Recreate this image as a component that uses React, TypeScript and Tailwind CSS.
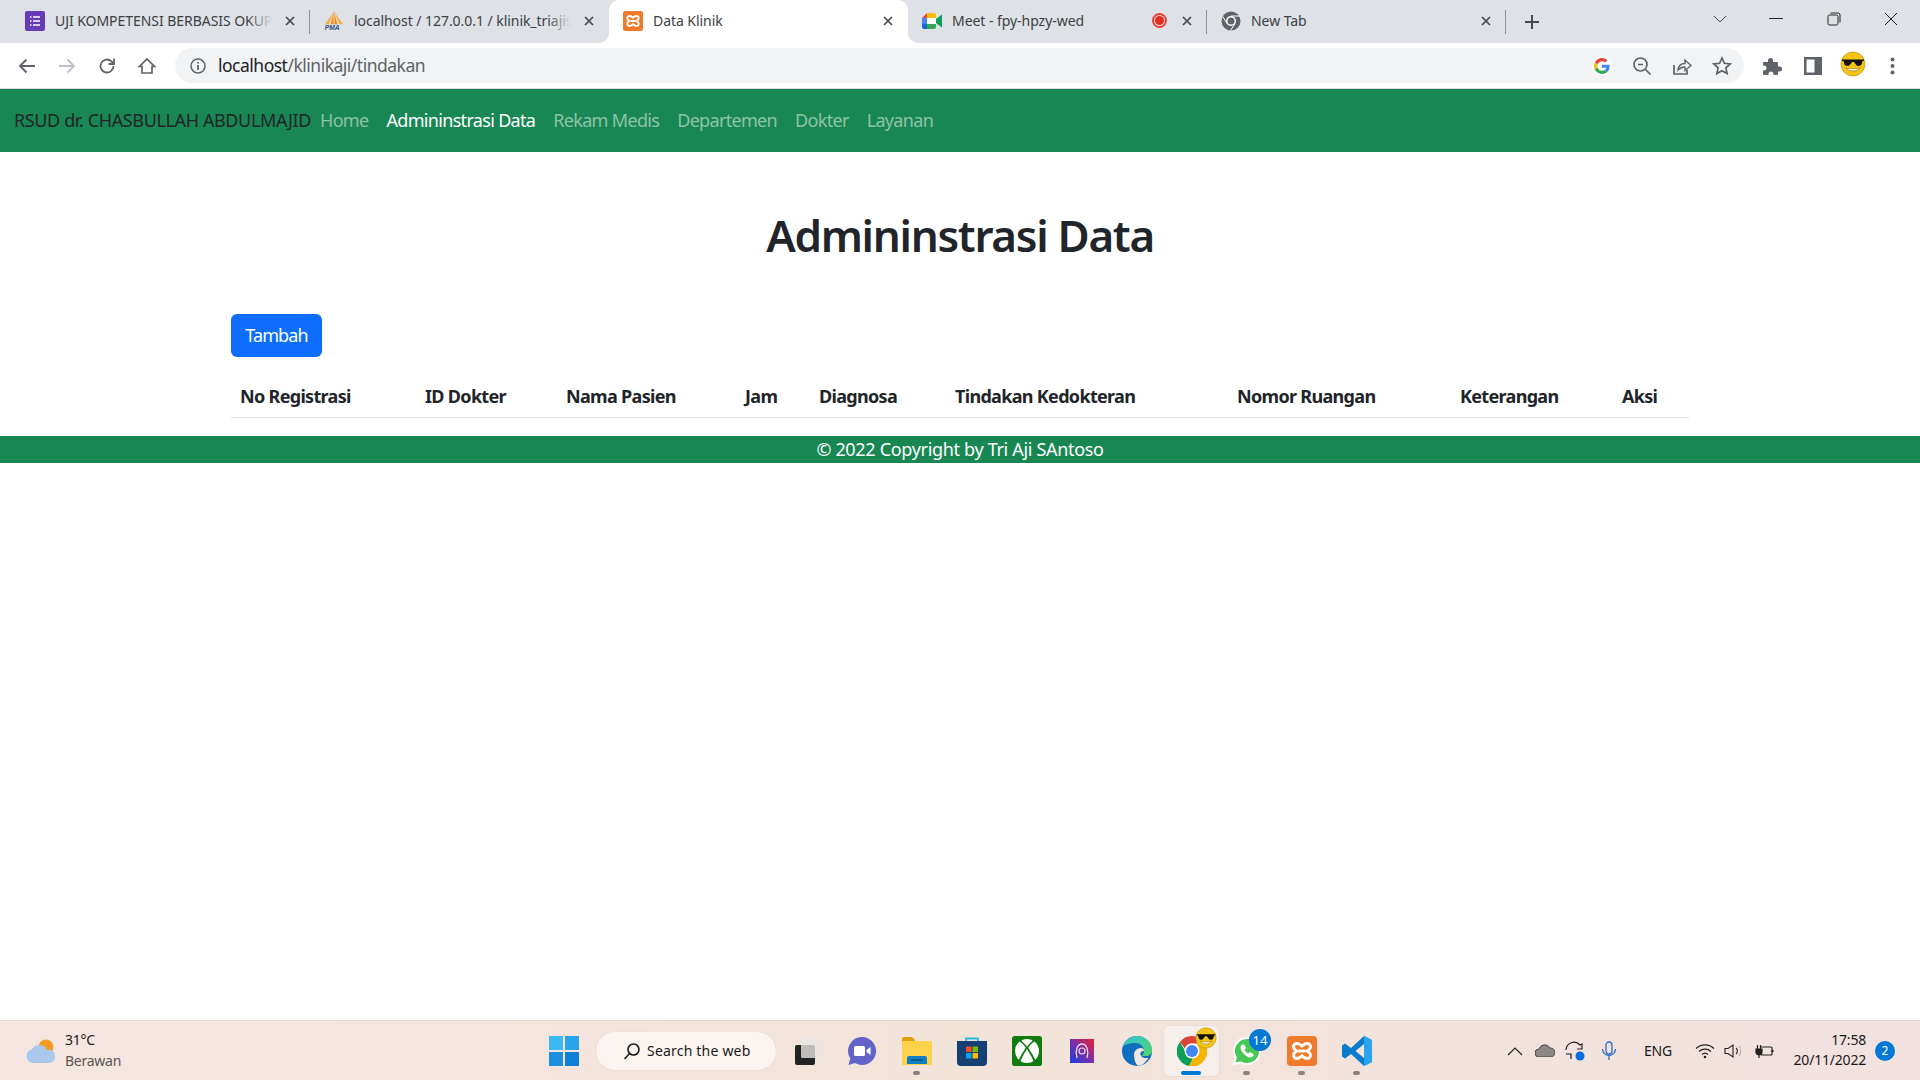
import { ReactNode } from "react";

const uiFont = "font-['Noto_Sans','Open_Sans',sans-serif]";

type TabProps = {
  icon: ReactNode;
  title: string;
  active?: boolean;
  fade?: boolean;
  extra?: ReactNode;
  separator?: boolean;
};

function CloseX() {
  return (
    <svg width="12" height="12" viewBox="0 0 12 12" className="shrink-0">
      <path d="M2 2l8 8M10 2l-8 8" stroke="#45484d" strokeWidth="1.7" />
    </svg>
  );
}

function Tab({ icon, title, active, fade, extra, separator }: TabProps) {
  return (
    <div
      className={`relative flex items-center w-[299px] h-[43px] pb-[2px] pl-[14px] pr-[14px] ${
        active ? "bg-white rounded-t-[10px] z-10" : ""
      }`}
    >
      {active && (
        <>
          <span className="absolute -left-[10px] bottom-0 w-[10px] h-[10px] bg-white">
            <span className="block w-full h-full bg-[#dee1e6] rounded-br-[10px]" />
          </span>
          <span className="absolute -right-[10px] bottom-0 w-[10px] h-[10px] bg-white">
            <span className="block w-full h-full bg-[#dee1e6] rounded-bl-[10px]" />
          </span>
        </>
      )}
      <span className="w-[20px] h-[20px] shrink-0 flex items-center justify-center">{icon}</span>
      <span className="relative flex-1 ml-[10px] overflow-hidden whitespace-nowrap text-[14px] tracking-[-0.05px] text-[#3c4043]">
        {title}
        {fade && (
          <span className="absolute right-0 top-0 h-full w-[24px] bg-gradient-to-r from-transparent to-[#dee1e6]" />
        )}
      </span>
      {extra}
      <span className="ml-[12px]">
        <CloseX />
      </span>
      {separator && <span className="absolute right-0 top-[10px] h-[24px] w-px bg-[#8f9297]" />}
    </div>
  );
}

function FormsIcon() {
  return (
    <svg width="20" height="20" viewBox="0 0 20 20">
      <rect width="20" height="20" rx="2" fill="#673ab7" />
      <path d="M8 6h7M8 10h7M8 14h7M5 6h1.5M5 10h1.5M5 14h1.5" stroke="#fff" strokeWidth="1.7" />
    </svg>
  );
}

function PmaIcon() {
  return (
    <svg width="24" height="24" viewBox="0 0 24 24">
      <path d="M11 2L6 16H1z" fill="#f6b24a" />
      <path d="M13 2l5 14h5z" fill="#f6b24a" />
      <path d="M12 0L8 16h8z" fill="#f08a1d" />
      <path d="M12 3v13" stroke="#fff" strokeWidth="0.800" />
      <text x="1" y="23" fontSize="8" fontWeight="700" fontStyle="italic" fill="#2e4f85" fontFamily="Liberation Sans">
        PMA
      </text>
    </svg>
  );
}

function XamppIcon({ size = 20 }: { size?: number }) {
  return (
    <svg width={size} height={size} viewBox="0 0 20 20">
      <rect width="20" height="20" rx="2.5" fill="#ee7a2b" />
      <path
        d="M5 5.5c2.2-1.4 3.4 0 5 1.2 1.6-1.2 2.8-2.6 5-1.2 1.5 1.5.5 3.2-1.4 4.5 1.9 1.3 2.9 3 1.4 4.5-2.2 1.4-3.4 0-5-1.2-1.6 1.2-2.8 2.6-5 1.2-1.5-1.5-.5-3.2 1.4-4.5C4.5 8.700 3.500 7 5 5.500z"
        fill="none"
        stroke="#fff"
        strokeWidth="2"
      />
      <path d="M7.500 10h5" stroke="#fff" strokeWidth="2" />
    </svg>
  );
}

function MeetIcon() {
  return (
    <svg width="20" height="18" viewBox="0 0 20 18">
      <path d="M0 6l5-5v5z" fill="#ea4335" />
      <path d="M0 6h5v6H0z" fill="#4285f4" />
      <path d="M0 12h5v5H2a2 2 0 0 1-2-2z" fill="#1967d2" />
      <path d="M5 1h7a2 2 0 0 1 2 2v4H5z" fill="#fbbc04" />
      <path d="M5 12h9v3a2 2 0 0 1-2 2H5z" fill="#34a853" />
      <path d="M14 7l6-4.500v13L14 11z" fill="#0f9d58" />
      <path d="M5 6h9v6H5z" fill="#fff" />
    </svg>
  );
}

function ChromeMono() {
  return (
    <svg width="20" height="20" viewBox="0 0 20 20">
      <circle cx="10" cy="10" r="9.500" fill="#5f6368" />
      <circle cx="10" cy="10" r="5" fill="#fff" />
      <circle cx="10" cy="10" r="3.500" fill="#5f6368" />
      <path d="M10 5h9M6 12.500L1.800 5.500M14 12.500l-4.500 7" stroke="#fff" strokeWidth="1" />
    </svg>
  );
}

function ToolIcon({ children, size = 20 }: { children: ReactNode; size?: number }) {
  return (
    <svg width={size} height={size} viewBox="0 0 20 20" fill="none" stroke="#5f6368" strokeWidth="1.700">
      {children}
    </svg>
  );
}

function Smiley({ size = 26 }: { size?: number }) {
  return (
    <svg width={size} height={size} viewBox="0 0 26 26">
      <circle cx="13" cy="13" r="12" fill="#f3c316" stroke="#c79a10" strokeWidth="0.800" />
      <path d="M2 8.500h22v1.500h-1.500l-1 3.500a3.500 3.500 0 0 1-6-.500L14 11h-2l-1.500 2a3.500 3.500 0 0 1-6 .500l-1-3.500H2z" fill="#111" />
      <path d="M6 17c3 4 11 4 14 0-3 1-11 1-14 0z" fill="#fff" stroke="#8a6a08" strokeWidth="0.600" />
    </svg>
  );
}

function ChromeBar() {
  return (
    <div className="bg-[#dee1e6]">
      <div className="flex items-center h-[43px] pl-[11px]">
        <Tab icon={<FormsIcon />} title="UJI KOMPETENSI BERBASIS OKUPASI" fade separator />
        <Tab icon={<PmaIcon />} title="localhost / 127.0.0.1 / klinik_triajis" fade />
        <Tab icon={<XamppIcon />} title="Data Klinik" active />
        <Tab
          icon={<MeetIcon />}
          title="Meet - fpy-hpzy-wed"
          extra={
            <span className="mr-[2px] w-[15px] h-[15px] rounded-full border-[2px] border-[#ea4335] flex items-center justify-center">
              <span className="w-[9px] h-[9px] rounded-full bg-[#e52c1f]" />
            </span>
          }
          separator
        />
        <Tab icon={<ChromeMono />} title="New Tab" separator />
        <svg width="16" height="16" viewBox="0 0 16 16" className="ml-[18px]">
          <path d="M8 1v14M1 8h14" stroke="#45484d" strokeWidth="2" />
        </svg>
        <div className="flex-1" />
        <svg width="14" height="8" viewBox="0 0 14 8" className="mb-[6px] mr-[20px]">
          <path d="M1 1l6 6 6-6" stroke="#45484d" fill="none" strokeWidth="1" />
        </svg>
        <div className="flex items-center h-full">
          <span className="w-[58px] flex justify-center mb-[6px]">
            <span className="block w-[14px] h-px bg-[#222]" />
          </span>
          <span className="w-[57px] flex justify-center mb-[6px]">
            <svg width="14" height="14" viewBox="0 0 14 14" fill="none" stroke="#222" strokeWidth="1">
              <rect x="1" y="3" width="10" height="10" rx="1.500" />
              <path d="M3.500 1H11a2 2 0 0 1 2 2v7.500" />
            </svg>
          </span>
          <span className="w-[58px] flex justify-center mb-[6px]">
            <svg width="14" height="14" viewBox="0 0 14 14">
              <path d="M1 1l12 12M13 1L1 13" stroke="#222" strokeWidth="1" />
            </svg>
          </span>
        </div>
      </div>
      <div className="flex items-center h-[45px] bg-white border-b border-[#dadce0] box-content -mb-px">
        <div className="flex items-center pl-[17px] gap-[20px]">
          <svg width="20" height="20" viewBox="0 0 20 20" fill="none" stroke="#5f6368" strokeWidth="1.800">
            <path d="M18 10H3M9.500 3.500L3 10l6.500 6.500" />
          </svg>
          <svg width="20" height="20" viewBox="0 0 20 20" fill="none" stroke="#bdc1c6" strokeWidth="1.800">
            <path d="M2 10h15M10.500 3.500L17 10l-6.500 6.500" />
          </svg>
          <svg width="20" height="20" viewBox="0 0 20 20" fill="none" stroke="#5f6368" strokeWidth="1.800">
            <path d="M16.500 10a6.500 6.500 0 1 1-2-4.700L17 7.800" />
            <path d="M17 2.500v5.500h-5.500" />
          </svg>
          <svg width="20" height="20" viewBox="0 0 20 20" fill="none" stroke="#5f6368" strokeWidth="1.700">
            <path d="M10 3l7.500 7.500H15V17H5v-6.500H2.500z" />
          </svg>
        </div>
        <div className="flex items-center ml-[18px] h-[35px] w-[1569px] rounded-full bg-[#f1f3f4] pl-[14px] pr-[12px]">
          <svg width="18" height="18" viewBox="0 0 18 18" fill="none" stroke="#5f6368" strokeWidth="1.500">
            <circle cx="9" cy="9" r="7" />
            <path d="M9 8v5M9 5v1.500" strokeWidth="1.800" />
          </svg>
          <span className="ml-[11px] text-[17.5px] tracking-[-0.5px] text-[#5f6368]">
            <span className="text-[#202124]">localhost</span>/klinikaji/tindakan
          </span>
          <div className="flex-1" />
          <span className="flex items-center justify-center w-[20px] h-[20px] rounded-full bg-white">
            <svg width="16" height="16" viewBox="0 0 48 48">
              <path fill="#ea4335" d="M24 10c3.600 0 6.800 1.300 9.300 3.600l6.900-6.900C36 2.700 30.500 0 24 0 14.600 0 6.500 5.400 2.600 13.200l8 6.200C12.500 13.900 17.800 10 24 10z" />
              <path fill="#4285f4" d="M47 24.500c0-1.600-.1-3.100-.4-4.500H24v9h13c-.6 3-2.300 5.500-4.800 7.200l7.700 6C44.400 37.900 47 31.700 47 24.500z" />
              <path fill="#fbbc05" d="M10.600 28.600C10.100 27.200 9.800 25.600 9.800 24s.3-3.200.8-4.600l-8-6.200C.9 16.500 0 20.100 0 24s.9 7.500 2.600 10.800z" />
              <path fill="#34a853" d="M24 48c6.500 0 11.900-2.100 15.900-5.800l-7.700-6c-2.200 1.400-4.900 2.300-8.200 2.300-6.200 0-11.500-3.900-13.400-9.900l-8 6.200C6.500 42.600 14.600 48 24 48z" />
            </svg>
          </span>
          <span className="ml-[20px]">
            <ToolIcon>
              <circle cx="8.500" cy="8.500" r="6.500" />
              <path d="M13.500 13.500L18.500 18.500M6 8.500h5" />
            </ToolIcon>
          </span>
          <span className="ml-[20px]">
            <ToolIcon>
              <path d="M2 9v9h13v-4" />
              <path d="M6 14c.5-4 3-6.500 7-6.500V4l6 5.500-6 5V11c-3 0-5 1-7 3z" strokeWidth="1.400" />
            </ToolIcon>
          </span>
          <span className="ml-[20px]">
            <ToolIcon>
              <path d="M10 2l2.400 5.300 5.800.7-4.300 3.900 1.200 5.700L10 14.700l-5.100 2.900 1.200-5.700L1.800 8l5.800-.7z" />
            </ToolIcon>
          </span>
        </div>
        <div className="flex items-center ml-[18px]">
          <svg width="20" height="20" viewBox="0 0 20 20" fill="#5f6368">
            <path d="M2 6h4V4.500a2.500 2.500 0 0 1 5 0V6h4a1 1 0 0 1 1 1v3.500h1.500a2.500 2.500 0 0 1 0 5H16V18a1 1 0 0 1-1 1h-3.500v-1a2.500 2.500 0 0 0-5 0v1H2a1 1 0 0 1-1-1v-3.500h1a2.500 2.500 0 0 0 0-5H1V7a1 1 0 0 1 1-1z" />
          </svg>
          <svg width="18" height="18" viewBox="0 0 18 18" className="ml-[22px]">
            <path d="M0 0h18v18H0z" fill="#5f6368" />
            <path d="M2.500 2.500h8v13h-8z" fill="#fff" />
          </svg>
          <span className="ml-[18px] mb-[3px]">
            <Smiley />
          </span>
          <svg width="5" height="18" viewBox="0 0 5 18" fill="#5f6368" className="ml-[24px]">
            <circle cx="2.500" cy="2.500" r="2" />
            <circle cx="2.500" cy="9" r="2" />
            <circle cx="2.500" cy="15.500" r="2" />
          </svg>
        </div>
      </div>
    </div>
  );
}

function Navbar() {
  const links = ["Home", "Admininstrasi Data", "Rekam Medis", "Departemen", "Dokter", "Layanan"];
  return (
    <nav className="flex items-center h-[63px] mt-px bg-[#198754] pl-[14px] text-[18px]">
      <span className="text-[#212529] w-[298px] tracking-[-0.38px] whitespace-nowrap">RSUD dr. CHASBULLAH ABDULMAJID</span>
      <div className="flex ml-[8px] gap-[18px] tracking-[-0.68px]">
        {links.map((link) => (
          <a key={link} className={link === "Admininstrasi Data" ? "text-white" : "text-[#8cc3a9]"}>
            {link}
          </a>
        ))}
      </div>
    </nav>
  );
}

function Table() {
  const cols: [string, string][] = [
    ["No Registrasi", "w-[185px]"],
    ["ID Dokter", "w-[141px]"],
    ["Nama Pasien", "w-[179px]"],
    ["Jam", "w-[74px]"],
    ["Diagnosa", "w-[136px]"],
    ["Tindakan Kedokteran", "w-[282px]"],
    ["Nomor Ruangan", "w-[223px]"],
    ["Keterangan", "w-[162px]"],
    ["Aksi", "w-[76px]"],
  ];
  return (
    <table className="table-fixed w-[1458px] border-collapse mt-[18px]">
      <thead>
        <tr className="border-b border-[#dee2e6] h-[42px]">
          {cols.map(([label, width]) => (
            <th key={label} className={`${width} px-[9px] pt-[2px] text-left text-[18px] font-bold tracking-[-0.68px] text-[#212529] whitespace-nowrap`}>
              {label}
            </th>
          ))}
        </tr>
      </thead>
    </table>
  );
}

function TaskIcon({ children, dot, active }: { children: ReactNode; dot?: boolean; active?: boolean }) {
  return (
    <div
      className={`relative flex items-center justify-center w-[55px] h-[50px] rounded-[5px] ${
        active ? "bg-[#f7efec] shadow-[0_0_1px_#bbb]" : ""
      }`}
    >
      {children}
      {dot && <span className="absolute bottom-[1px] left-[24px] w-[7px] h-[4px] rounded-full bg-[#8a8280]" />}
      {active && <span className="absolute bottom-[1px] left-[17px] w-[20px] h-[4px] rounded-full bg-[#0078d4]" />}
    </div>
  );
}

function Taskbar() {
  return (
    <div className="flex items-center h-[60px] border-t border-[#e8d9d3] bg-gradient-to-r from-[#f6e6e2] via-[#f3e4da] to-[#f2e2e0] text-[#1a1a1a]">
      <svg width="32" height="26" viewBox="0 0 32 26" className="ml-[25px] shrink-0">
        <circle cx="21" cy="9" r="7.500" fill="#f59a23" />
        <path d="M8 25a7 7 0 0 1-1-13.800A8.500 8.500 0 0 1 22 12a6.500 6.500 0 0 1 3 13z" fill="#a9c8ec" />
      </svg>
      <div className="ml-[8px] mb-[1px] flex flex-col w-[60px] text-[14px] leading-[21px] tracking-[-0.25px]">
        <span>31°C</span>
        <span className="text-[#5b5654]">Berawan</span>
      </div>
      <svg width="30" height="30" viewBox="0 0 30 30" className="ml-[424px] shrink-0">
        <path d="M0 0h14v14H0z" fill="#3cb8f2" />
        <path d="M16 0h14v14H16z" fill="#28a5ea" />
        <path d="M0 16h14v14H0z" fill="#1b90e0" />
        <path d="M16 16h14v14H16z" fill="#0e7fd6" />
      </svg>
      <div className="ml-[17px] flex items-center w-[180px] h-[38px] rounded-full bg-[#fbf4f0] shadow-[0_0_1px_#ccc] pl-[27px] text-[14px] tracking-[0.2px]">
        <svg width="18" height="18" viewBox="0 0 18 18" fill="none" stroke="#1a1a1a" strokeWidth="1.600">
          <circle cx="10.500" cy="7.500" r="5.500" />
          <path d="M6.500 11.500L1.500 17" />
        </svg>
        <span className="ml-[6px]">Search the web</span>
      </div>
      <div className="ml-[3px] flex items-center">
        <TaskIcon>
          <svg width="30" height="30" viewBox="0 0 30 30">
            <rect x="3" y="9" width="20" height="20" rx="2" fill="#222" />
            <rect x="9" y="2" width="20" height="20" rx="1.500" fill="#e9e6e4" fillOpacity="0.800" />
          </svg>
        </TaskIcon>
        <TaskIcon>
          <svg width="30" height="30" viewBox="0 0 30 30">
            <path d="M15 1a14 14 0 1 1-7 26.100L1.500 29l1.800-6.500A14 14 0 0 1 15 1z" fill="#6264c8" />
            <rect x="7" y="10" width="11" height="10" rx="1.500" fill="#fff" />
            <path d="M19.500 14l4-3v8l-4-3z" fill="#fff" />
          </svg>
        </TaskIcon>
        <TaskIcon dot>
          <svg width="30" height="28" viewBox="0 0 30 28">
            <path d="M0 2a2 2 0 0 1 2-2h8l3 3v3H0z" fill="#dca20b" />
            <path d="M0 4h30v24H0z" fill="#fcd24b" />
            <path d="M5 27v-6a2 2 0 0 1 2-2h16a2 2 0 0 1 2 2v6z" fill="#0f7fc4" />
            <path d="M9 23h12" stroke="#064f80" strokeWidth="1.500" />
          </svg>
        </TaskIcon>
        <TaskIcon>
          <svg width="30" height="30" viewBox="0 0 30 30">
            <path d="M9 8V2.500h12V8" fill="none" stroke="#2fb6e8" strokeWidth="1.800" />
            <path d="M0 5h30v21a4 4 0 0 1-4 4H4a4 4 0 0 1-4-4z" fill="#163f73" />
            <path d="M9 10.500h5.500V16H9z" fill="#f25022" />
            <path d="M15.500 10.500H21V16h-5.500z" fill="#7fba00" />
            <path d="M9 17h5.500v5.500H9z" fill="#00a4ef" />
            <path d="M15.500 17H21v5.500h-5.500z" fill="#ffb900" />
          </svg>
        </TaskIcon>
        <TaskIcon>
          <svg width="30" height="30" viewBox="0 0 30 30">
            <rect width="30" height="30" rx="2.500" fill="#107c10" />
            <circle cx="15" cy="15" r="12" fill="#fff" />
            <path d="M8 4.500C12 7 18 15 23 25.500M22 4.500C18 7 12 15 7 25.500" fill="none" stroke="#107c10" strokeWidth="2" />
            <path d="M15 10.500L10 5h10z" fill="#fff" />
          </svg>
        </TaskIcon>
        <TaskIcon>
          <svg width="24" height="24" viewBox="0 0 24 24">
            <defs>
              <linearGradient id="pic" x1="0" y1="1" x2="1" y2="0">
                <stop offset="0" stopColor="#1a3de0" />
                <stop offset="0.500" stopColor="#7a2fa8" />
                <stop offset="1" stopColor="#f0202c" />
              </linearGradient>
            </defs>
            <rect width="24" height="24" fill="url(#pic)" />
            <path d="M7 19c-2-7 0-14 5-14s7 7 5 14" fill="none" stroke="#e9d8ea" strokeWidth="1.300" />
            <circle cx="12" cy="12" r="3" fill="none" stroke="#e9d8ea" strokeWidth="1.200" />
          </svg>
        </TaskIcon>
        <TaskIcon>
          <svg width="30" height="30" viewBox="0 0 30 30">
            <defs>
              <linearGradient id="edgeA" x1="0" y1="0" x2="1" y2="1">
                <stop offset="0" stopColor="#31c5d8" />
                <stop offset="1" stopColor="#55d26a" />
              </linearGradient>
            </defs>
            <circle cx="15" cy="15" r="15" fill="#0f6fbe" />
            <path d="M1 11C3 4 9 0 15 0c8 0 15 6 15 14 0 4-3 6-6 6h-5c2-1 3-3 3-5 0-5-4-8-9-8-5 0-10 1-12 4z" fill="url(#edgeA)" />
            <path d="M12 19c0-4 3-7 7-7 2 0 3 1.500 3 3-2 0-4 1-3.500 3.500.5 3 4 4 8 3.500-3 4-6 8-11 7.500-2-2-3.500-6-3.500-10.500z" fill="#f3e6df" />
          </svg>
        </TaskIcon>
        <TaskIcon active>
          <svg width="30" height="30" viewBox="0 0 30 30">
            <path d="M15 0a15 15 0 0 1 13 7.500H15a7.500 7.500 0 0 0-7 5L2.900 6A15 15 0 0 1 15 0z" fill="#db4437" />
            <path d="M2.900 6L9 16.500a7.500 7.500 0 0 0 7 6L12 30A15 15 0 0 1 2.900 6z" fill="#0f9d58" />
            <path d="M28 7.500A15 15 0 0 1 12 30l6.500-11.500A7.500 7.500 0 0 0 20 8z" fill="#f4b400" />
            <circle cx="15" cy="15" r="7.500" fill="#fff" />
            <circle cx="15" cy="15" r="6" fill="#4285f4" />
          </svg>
          <span className="absolute top-[1px] right-[2px]">
            <Smiley size={22} />
          </span>
        </TaskIcon>
        <TaskIcon dot>
          <svg width="30" height="30" viewBox="0 0 30 30">
            <path d="M15 2A13 13 0 0 0 3.800 21.600L2 28l6.600-1.700A13 13 0 1 0 15 2z" fill="#48c857" stroke="#fff" strokeWidth="2" />
            <path d="M10.500 8.500c-1 0-2 1.500-2 3 0 4 6 10 10 10 1.500 0 3-1 3-2.500v-1l-3.500-2-1.500 1.500c-1.500-.5-3.500-2.500-4-4l1.500-1.500-2-3.500z" fill="#fff" />
          </svg>
          <span className="absolute top-[3px] right-[3px] w-[22px] h-[22px] rounded-full bg-[#0078d4] text-white text-[13px] leading-[22px] text-center">
            14
          </span>
        </TaskIcon>
        <TaskIcon dot>
          <XamppIcon size={30} />
        </TaskIcon>
        <TaskIcon dot>
          <svg width="30" height="30" viewBox="0 0 30 30">
            <path d="M22 0l8 4v22l-8 4-13-12-6 4.500L0 20.500V9.500L3 7.500l6 4.500z" fill="#0a7ccb" />
            <path d="M22 0l8 4v22l-8 4z" fill="#2aa4ee" />
            <path d="M22 8l-8.500 7 8.500 7z" fill="#f1e4dd" />
          </svg>
        </TaskIcon>
      </div>
      <div className="ml-[123px] flex items-center">
        <svg width="16" height="10" viewBox="0 0 16 10" fill="none" stroke="#222" strokeWidth="1.200">
          <path d="M1 9l7-7 7 7" />
        </svg>
        <svg width="20" height="13" viewBox="0 0 20 13" className="ml-[12px]">
          <path d="M4 13a4 4 0 0 1 0-8 6 6 0 0 1 11-1 4.500 4.500 0 0 1 1 9z" fill="#8a8886" stroke="#333" strokeWidth="0.800" />
        </svg>
        <svg width="20" height="20" viewBox="0 0 20 20" fill="none" stroke="#222" strokeWidth="1.200" className="ml-[10px]">
          <path d="M1 9a8 8 0 0 1 14-5l2-1v5h-5M1 13h5v5" />
          <circle cx="15" cy="15" r="4.500" fill="#0b6be0" stroke="none" />
        </svg>
        <svg width="16" height="20" viewBox="0 0 16 20" fill="none" stroke="#2f6fc0" strokeWidth="1.300" className="ml-[16px]">
          <rect x="5" y="1" width="6" height="12" rx="3" />
          <path d="M1.500 8a6.500 6.500 0 0 0 13 0M8 15v4" />
        </svg>
        <span className="ml-[27px] text-[14px] tracking-[-0.2px]">ENG</span>
        <svg width="20" height="16" viewBox="0 0 20 16" fill="none" stroke="#222" strokeWidth="1.300" className="ml-[23px]">
          <path d="M1 5.500a13 13 0 0 1 18 0M4 8.500a9 9 0 0 1 12 0M7 11.500a4.500 4.500 0 0 1 6 0" />
          <circle cx="10" cy="14" r="1.300" fill="#222" stroke="none" />
        </svg>
        <svg width="20" height="16" viewBox="0 0 20 16" fill="none" stroke="#222" strokeWidth="1.100" className="ml-[9px]">
          <path d="M1 5.500h3L9 2v12l-5-3.500H1z" />
          <path d="M12 5a4 4 0 0 1 0 6" />
          <path d="M15 3a8 8 0 0 1 0 10" stroke="#aaa" />
        </svg>
        <svg width="20" height="16" viewBox="0 0 20 16" className="ml-[11px]" fill="none" stroke="#222" strokeWidth="1.200">
          <path d="M6 4h10a1 1 0 0 1 1 1v6a1 1 0 0 1-1 1H6" />
          <path d="M17.500 7v2" strokeWidth="2" />
          <path d="M1 6h6v3a3 3 0 0 1-6 0zM2.500 2v4M5.500 2v4M4 12v3" fill="#222" />
        </svg>
      </div>
      <div className="ml-[9px] mb-[2px] flex flex-col items-end w-[82px] text-[14px] leading-[20px] tracking-[-0.2px]">
        <span>17:58</span>
        <span>20/11/2022</span>
      </div>
      <span className="ml-[9px] w-[20px] h-[20px] rounded-full bg-[#0078d4] text-white text-[12px] leading-[20px] text-center">2</span>
    </div>
  );
}

export default function App() {
  return (
    <div className={`flex flex-col w-[1920px] h-[1080px] overflow-hidden bg-white ${uiFont}`}>
      <ChromeBar />
      <Navbar />
      <main>
        <h1 className="mt-[57px] text-center text-[44px] leading-[52px] font-semibold tracking-[-1.3px] text-[#212529]">
          Admininstrasi Data
        </h1>
        <div className="ml-[231px] mt-[53px]">
          <button className="h-[43px] w-[91px] rounded-[6px] bg-[#0d6efd] text-white text-[18px] tracking-[-0.9px]">
            Tambah
          </button>
          <Table />
        </div>
      </main>
      <footer className="mt-[18px] h-[27px] bg-[#198754] text-center text-[18px] leading-[27px] tracking-[-0.32px] text-white">
        © 2022 Copyright by Tri Aji SAntoso
      </footer>
      <div className="flex-1" />
      <Taskbar />
    </div>
  );
}
